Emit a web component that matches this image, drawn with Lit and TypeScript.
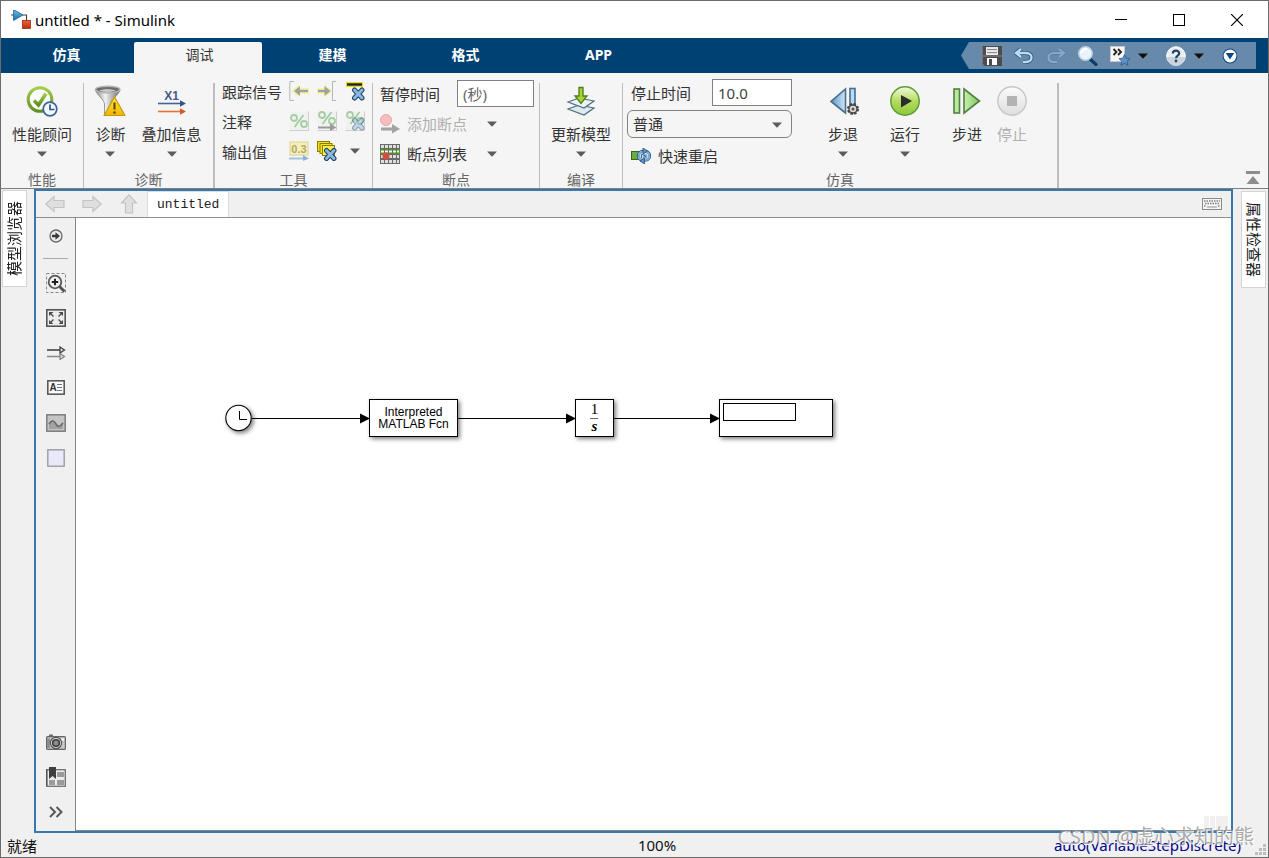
import { LitElement, html, css, svg, nothing, TemplateResult } from "lit";
import { customElement, property } from "lit/decorators.js";

const shared = css`
  * { box-sizing: border-box; }
  button, input, select {
    font: inherit;
    color: inherit;
    margin: 0;
    padding: 0;
    border: 0;
    background: none;
    border-radius: 0;
  }
  button { cursor: default; }
  svg { display: block; flex: none; }
`;

const icon = (w: number, h: number, body: unknown) =>
  html`<svg width=${w} height=${h} viewBox="0 0 ${w} ${h}" aria-hidden="true">${body}</svg>`;

const caret = (color = "#5c5c5c") => icon(10, 6, svg`<path d="M0 .5H10L5 5.8Z" fill=${color} />`);

/* ---------- title and quick access icons ---------- */

const logo = icon(20, 20, svg`
  <defs><linearGradient id="lg" x1="0" y1="0" x2="0" y2="1"><stop offset="0" stop-color="#6fc3ea" /><stop offset="1" stop-color="#1a6aa8" /></linearGradient>
  <linearGradient id="lr" x1="0" y1="0" x2="0" y2="1"><stop offset="0" stop-color="#f0603a" /><stop offset="1" stop-color="#b8300e" /></linearGradient></defs>
  <path d="M0 5H3M11 5H15.5V11" fill="none" stroke="#444" stroke-width="1.2" />
  <path d="M2.5 -.5L12 5L2.5 10.5Z" fill="url(#lg)" stroke="#1d5f92" stroke-width=".8" />
  <rect x="11.5" y="10.5" width="8" height="8" fill="url(#lr)" stroke="#9c2c10" stroke-width=".8" />`);

const saveIcon = icon(20, 20, svg`
  <path d="M0 0H20V20H2L0 18Z" fill="#4c4c4c" />
  <rect x="4" y="1" width="12" height="8" fill="#e6e6e6" />
  <path d="M5 3.5H15M5 6.5H15" stroke="#8a8a8a" />
  <path d="M0 10H20" stroke="#8d8d8d" />
  <rect x="5" y="12" width="10" height="7" fill="#fff" />
  <rect x="7" y="13" width="3" height="6" fill="#4c4c4c" />
  <path d="M.5 .5V17.5L2.5 19.5" stroke="#777" fill="none" />`);
const undoIcon = icon(20, 16, svg`
  <path d="M7 1L2 5L7 9M2 5H12C16 5 17.5 7.5 17.5 9.5C17.5 12.5 15 14 12 14H9" fill="none" stroke="#29577f" stroke-width="4" />
  <path d="M7 1L2 5L7 9M2 5H12C16 5 17.5 7.5 17.5 9.5C17.5 12.5 15 14 12 14H9" fill="none" stroke="#b9dcf2" stroke-width="2.4" />`);
const redoIcon = icon(20, 16, svg`
  <g transform="matrix(-1 0 0 1 20 0)" opacity=".55">
  <path d="M7 1L2 5L7 9M2 5H12C16 5 17.5 7.5 17.5 9.5C17.5 12.5 15 14 12 14H9" fill="none" stroke="#4f7ba3" stroke-width="4" />
  <path d="M7 1L2 5L7 9M2 5H12C16 5 17.5 7.5 17.5 9.5C17.5 12.5 15 14 12 14H9" fill="none" stroke="#9fc3df" stroke-width="2.2" /></g>`);
const searchIcon = icon(20, 20, svg`
  <path d="M12 13L18 18.5" stroke="#143c63" stroke-width="3.2" stroke-linecap="round" />
  <circle cx="7.5" cy="7.5" r="6.7" fill="#eaf3f9" stroke="#bcd2e2" stroke-width="1.5" />
  <path d="M3 7A5 5 0 0 1 9 3" fill="none" stroke="#fff" stroke-width="2" />`);
const favIcon = icon(20, 20, svg`
  <rect x=".5" y=".5" width="14" height="15" fill="#f6f6f6" stroke="#c8c8c8" />
  <path d="M3.5 3L6.5 6L3.5 9M8 3L11 6L8 9" fill="none" stroke="#222" stroke-width="1.8" />
  <path d="M14.5 8.5L16.2 12.2L20 12.6L17.2 15.3L18 19.3L14.5 17.3L11 19.3L11.8 15.3L9 12.6L12.8 12.2Z" fill="#5d93c4" stroke="#2c5a88" stroke-width=".8" />`);
const helpIcon = icon(20, 20, svg`
  <circle cx="10" cy="10" r="9.3" fill="#e9eef3" stroke="#fff" stroke-width="1" />
  <path d="M1 11A9 9 0 0 0 19 11Z" fill="#c9d4de" />
  <path d="M6.8 7.5C6.8 3.8 13.2 3.8 13.2 7.4C13.2 9.6 10 9.6 10 12.2" fill="none" stroke="#24455f" stroke-width="2.2" />
  <circle cx="10" cy="15" r="1.4" fill="#24455f" />`);
const moreIcon = icon(16, 16, svg`
  <circle cx="8" cy="8" r="7.4" fill="#0c4a7d" />
  <circle cx="8" cy="8" r="6.4" fill="#fff" />
  <path d="M3.8 5H12.2L8 11.6Z" fill="#0c4a7d" />`);

/* ---------- ribbon icons ---------- */

const perfIcon = icon(32, 32, svg`
  <defs><linearGradient id="pg" x1="0" y1="0" x2="0" y2="1"><stop offset="0" stop-color="#a5cf4b" /><stop offset="1" stop-color="#5f8f22" /></linearGradient></defs>
  <circle cx="14" cy="14.5" r="11.8" fill="#fafafa" stroke="url(#pg)" stroke-width="3" />
  <path d="M8 15.5L12.5 20L20 8.5" fill="none" stroke="url(#pg)" stroke-width="3.6" />
  <circle cx="24" cy="24" r="6.8" fill="#f3f8fd" stroke="#3b659a" stroke-width="1.7" />
  <path d="M24 19.5V24.5H28.5" fill="none" stroke="#2d568b" stroke-width="1.7" />`);
const diagIcon = icon(32, 32, svg`
  <defs><linearGradient id="fg" x1="0" y1="0" x2="1" y2="0"><stop offset="0" stop-color="#8a8a8a" /><stop offset=".4" stop-color="#f2f2f2" /><stop offset="1" stop-color="#6e6e6e" /></linearGradient>
  <linearGradient id="wg" x1="0" y1="0" x2="0" y2="1"><stop offset="0" stop-color="#ffe94a" /><stop offset="1" stop-color="#f0b400" /></linearGradient></defs>
  <path d="M1.5 5C2 9 10.5 15 10.5 19V30L16.5 28V19C16.5 15 25.5 9 26 5Z" fill="url(#fg)" stroke="#777" stroke-width=".7" />
  <ellipse cx="13.7" cy="4.5" rx="12.2" ry="3.3" fill="#6d6d6d" stroke="#b4b4b4" stroke-width="1.4" />
  <path d="M5 5.5Q13 2.5 22 5.5Q13 8.5 5 5.5" fill="#c9c9c9" />
  <path d="M20.5 12L31 30.5H10Z" fill="url(#wg)" stroke="#c99a06" stroke-width="1.2" stroke-linejoin="round" />
  <path d="M20.5 17.5V24.5" stroke="#6a4c00" stroke-width="2.2" /><circle cx="20.5" cy="27.5" r="1.3" fill="#6a4c00" />`);
const overlayIcon = icon(32, 32, svg`
  <text x="15.5" y="15" text-anchor="middle" font-family="Liberation Sans, sans-serif" font-weight="700" font-size="12" fill="#44598c">X1</text>
  <path d="M2 18.5H25" stroke="#44639a" stroke-width="1.6" /><path d="M24 15.3L30 18.5L24 21.7Z" fill="#34548c" />
  <path d="M2 26.5H25" stroke="#e2703a" stroke-width="1.6" /><path d="M24 23.3L30 26.5L24 29.7Z" fill="#d85a20" />`);

const blueX = svg`<path d="M9.5 9L17 17M17 9L9.5 17" stroke="#1f3f63" stroke-width="5" stroke-linecap="round" /><path d="M9.5 9L17 17M17 9L9.5 17" stroke="#8ab8e0" stroke-width="3" stroke-linecap="round" />`;
const pageBase = svg`<path d="M.5 .5H19.5V19.5H.5" fill="#f1f1f1" /><path d="M19.5 .5V19.5H.5" fill="none" stroke="#cfcfcf" />`;
const pct = svg`<path d="M14.5 4L5.5 16" stroke="#a5cfa2" stroke-width="1.8" /><circle cx="5" cy="7" r="3" fill="none" stroke="#a5cfa2" stroke-width="1.8" /><circle cx="15" cy="13" r="3" fill="none" stroke="#a5cfa2" stroke-width="1.8" />`;

const traceIn = icon(20, 20, svg`<path d="M1 .5H5M1 19.5H5M.8 .5V19.5" stroke="#b5b5b5" fill="none" />
  <path d="M2.500 10L10 3V7H20V13H10V17Z" fill="#f5f3a6" /><path d="M19 10H9" stroke="#a0a0a0" stroke-width="2.4" /><path d="M5 10L11 5V15Z" fill="#a0a0a0" />`);
const traceOut = icon(20, 20, svg`<path d="M15 .5H19M15 19.5H19M15.5 .5V19.5" stroke="#b5b5b5" fill="none" />
  <path d="M15 10L8 3V7H0V13H8V17Z" fill="#f5f3a6" /><path d="M1 10H10" stroke="#a0a0a0" stroke-width="2.4" /><path d="M13.5 10L7.5 5V15Z" fill="#a0a0a0" />`);
const traceClear = icon(20, 20, svg`<path d="M1 3.5H18" stroke="#e9dc1e" stroke-width="5" /><path d="M2 3.5H17" stroke="#222" stroke-width="2.4" />${blueX}`);
const noteOne = icon(20, 20, svg`${pageBase}${pct}`);
const noteTwo = icon(20, 20, svg`${pageBase}<g transform="translate(0 -3)">${pct}</g><path d="M1 16.5H15" stroke="#999" stroke-width="2" /><path d="M13 12.5L19.5 16.5L13 20Z" fill="#999" />`);
const noteClear = icon(20, 20, svg`${pageBase}<g transform="translate(0 -3)">${pct}</g><g opacity=".45">${blueX}</g>`);
const valueOut = icon(20, 20, svg`<rect x="1" y="1" width="18" height="13" fill="#f6efb6" stroke="#d9d29a" />
  <text x="10" y="12" text-anchor="middle" font-family="Liberation Sans, sans-serif" font-size="11" font-weight="700" fill="#b3a76a">0.3</text>
  <path d="M0 17.5H15" stroke="#a8c4dc" stroke-width="2" /><path d="M14 14L20 17.5L14 20Z" fill="#8fb2cf" />`);
const valueClear = icon(20, 20, svg`<rect x=".5" y=".5" width="12" height="10" fill="#f2e21c" stroke="#8a7d00" /><rect x="3" y="2.5" width="12" height="10" fill="#f2e21c" stroke="#8a7d00" /><rect x="5.5" y="4.5" width="12" height="10" fill="#fbf14d" stroke="#8a7d00" />
  <g transform="translate(0 .5)">${blueX}</g>`);

const bpAdd = icon(20, 20, svg`<circle cx="6" cy="6" r="5.5" fill="#f6bdbd" stroke="#e9a5a5" />
  <path d="M1 15H14" stroke="#a3a3a3" stroke-width="3" /><path d="M12 10L20 15L12 19.5Z" fill="#a3a3a3" />`);
const bpList = icon(20, 20, svg`<rect width="20" height="20" fill="#6a6a6a" />
  <path d="M1 2.5H19M1 12.5H19M1 17.5H19" stroke="#dedede" stroke-width="3" /><path d="M0 7.5H20" stroke="#4d9a26" stroke-width="5" /><path d="M1 7.5H19" stroke="#f0fbe8" stroke-width="2" />
  <path d="M4.5 0V20M8.5 0V20M12.5 0V20M16.5 0V20" stroke="#6a6a6a" stroke-width="1" /><circle cx="6" cy="12" r="3.6" fill="#d94b42" />`);
const updateIcon = icon(32, 32, svg`
  <path d="M3 24L14 20L29 23L19 30Z" fill="#dfeaf0" stroke="#4f6f7d" stroke-width="1.2" />
  <path d="M3 17L14 13L29 16L19 23Z" fill="#eaf3f6" stroke="#4f6f7d" stroke-width="1.2" />
  <path d="M14 2.500H18V11H22L16 18.500L10 11H14Z" fill="#a4d433" stroke="#4e7c14" stroke-width="1.3" />`);
const fastIcon = icon(20, 16, svg`<rect x=".5" y="3.5" width="7" height="8" fill="#6cab3d" stroke="#34651a" />
  <rect x="6.500" y="2.500" width="13" height="10.500" rx="4.500" fill="#cfe1f0" stroke="#24517e" />
  <rect x="8" y="4" width="10" height="7.500" rx="3.500" fill="none" stroke="#79a9d3" stroke-width="2" />
  <path d="M12 0L16.5 3L12 6ZM13.500 10L9 13L13.500 16Z" fill="#5f94c6" stroke="#24517e" stroke-width=".8" />
  <path d="M10.500 10V6.500H12M13 10V6.500L15 9.500V6.500" stroke="#2f5780" stroke-width=".9" fill="none" />`);

const backIcon = icon(32, 32, svg`
  <defs><linearGradient id="bb" x1="0" y1="0" x2="1" y2="0"><stop offset="0" stop-color="#5d98cb" /><stop offset="1" stop-color="#cfe6f6" /></linearGradient></defs>
  <path d="M18.5 4V28L4 16.5Z" fill="url(#bb)" stroke="#4a6d8c" stroke-width="1.6" />
  <rect x="23" y="3.5" width="5" height="24" fill="#b5dcf4" stroke="#4a6d8c" stroke-width="1.6" />
  <circle cx="26" cy="24" r="4.5" fill="#d6d6d6" stroke="#444" stroke-width="3" stroke-dasharray="2.2 1.33" /><circle cx="26" cy="24" r="4" fill="#dadada" stroke="#444" stroke-width="1.4" /><circle cx="26" cy="24" r="1.5" fill="#555" />`);
const runIcon = icon(32, 32, svg`
  <defs><linearGradient id="rg" x1="0" y1="0" x2="0" y2="1"><stop offset="0" stop-color="#f2fbdf" /><stop offset=".5" stop-color="#b4dc5e" /><stop offset="1" stop-color="#8cc63a" /></linearGradient></defs>
  <circle cx="16" cy="16" r="14.2" fill="url(#rg)" stroke="#5d9c35" stroke-width="1.5" />
  <path d="M12 10L23 16L12 22.5Z" fill="#2b2b2b" />`);
const stepIcon = icon(32, 32, svg`
  <defs><linearGradient id="sg" x1="0" y1="0" x2="1" y2="0"><stop offset="0" stop-color="#c9efb0" /><stop offset="1" stop-color="#7ccb55" /></linearGradient></defs>
  <rect x="3" y="4" width="5.5" height="24" fill="#b9ea9d" stroke="#527f43" stroke-width="1.6" />
  <path d="M13 4V28L28.5 16Z" fill="url(#sg)" stroke="#527f43" stroke-width="1.6" />`);
const stopIcon = icon(32, 32, svg`
  <defs><linearGradient id="tg" x1="0" y1="0" x2="0" y2="1"><stop offset="0" stop-color="#fbfbfb" /><stop offset="1" stop-color="#dedede" /></linearGradient></defs>
  <circle cx="16" cy="16" r="14.2" fill="url(#tg)" stroke="#c6c6c6" stroke-width="1.4" />
  <rect x="11" y="11" width="10" height="10" fill="#b3b3b3" />`);
const collapseIcon = icon(14, 14, svg`<path d="M0 1.5H14" stroke="#8d8d8d" stroke-width="3" /><path d="M7 5L13.5 13H.5Z" fill="#8d8d8d" />`);

/* ---------- editor icons ---------- */

const navArrow = (deg: number) => icon(20, 20, svg`<path d="M.8 10L9 2.500V6.500H19V13.500H9V17.500Z" transform="rotate(${deg} 10 10)" fill="#dfdfdf" stroke="#c4c4c4" stroke-width="1.2" />`);
const keyboardIcon = icon(20, 12, svg`<rect x=".5" y=".5" width="19" height="11" fill="#f5f5f5" stroke="#8a8a8a" />
  <path d="M2 3H18M3 5.5H18M2 8H4M16 8H18" stroke="#808080" stroke-width="1.5" stroke-dasharray="1.5 1" /><path d="M5 9H15" stroke="#909090" />`);
const hideIcon = icon(14, 14, svg`<circle cx="7" cy="7" r="6" fill="#ececec" stroke="#6a6a6a" stroke-width="1.3" /><path d="M3 5.7H6.5V3.3L11 7L6.5 10.7V8.3H3Z" fill="#3a3a3a" />`);
const zoomIcon = icon(20, 20, svg`<rect x=".5" y=".5" width="19" height="19" fill="none" stroke="#8a8a8a" stroke-dasharray="3 2" />
  <path d="M13.5 13.5L18.5 18.5" stroke="#505050" stroke-width="2.8" /><circle cx="9" cy="9" r="6.3" fill="#f0f0f0" stroke="#5a5a5a" stroke-width="1.8" />
  <path d="M9 5.8V12.2M5.8 9H12.2" stroke="#222" stroke-width="2" />`);
const fitIcon = icon(20, 18, svg`<rect x=".8" y=".8" width="18.4" height="16.4" fill="#ececec" stroke="#555" stroke-width="1.6" />
  <path d="M3 3H7.5L3 7ZM17 3H12.5L17 7ZM3 15H7.5L3 11ZM17 15H12.5L17 11Z" fill="#4a4a4a" /><path d="M4 4L7.5 7.5M16 4L12.5 7.5M4 14L7.5 10.5M16 14L12.5 10.5" stroke="#4a4a4a" stroke-width="1.3" />`);
const signalIcon = icon(20, 14, svg`<path d="M1 4H15" stroke="#444" stroke-width="1.6" /><path d="M14 1L18.5 4L14 7Z" fill="#ddd" stroke="#444" stroke-width="1.3" />
  <path d="M1 10.5H15" stroke="#8a8a8a" stroke-width="1.6" /><path d="M14 7.5L18.5 10.5L14 13.5Z" fill="#ddd" stroke="#808080" stroke-width="1.2" />`);
const textIcon = icon(18, 15, svg`<rect x=".8" y=".8" width="16.4" height="13.4" fill="#fafafa" stroke="#5a5a5a" stroke-width="1.6" />
  <text x="2.5" y="11" font-family="Liberation Sans, sans-serif" font-weight="700" font-size="10" fill="#333">A</text><path d="M10 4.5H15M10 7.5H15M10 10.5H15" stroke="#777" />`);
const imageIcon = icon(20, 18, svg`<rect x=".8" y=".8" width="18.4" height="16.4" fill="#c4c4c4" stroke="#777" stroke-width="1.4" />
  <path d="M3 9C6 4.5 8 6 10 10C12 13 13.5 12 17 8V15H3Z" fill="#a2a2a2" /><path d="M3 10C6 5.5 8 6.5 10 10C12 13.5 14 13 17 9" fill="none" stroke="#6b6b6b" stroke-width="1.6" />`);
const areaIcon = icon(18, 18, svg`<rect x=".8" y=".8" width="16.4" height="16.4" fill="#e9e9f9" stroke="#9c9ca0" stroke-width="1.4" />`);
const cameraIcon = icon(20, 16, svg`<rect x="3" y=".5" width="4" height="3" fill="#6a6a6a" /><rect x=".6" y="2.6" width="18.8" height="12.8" rx="1" fill="#c9c9c9" stroke="#666" stroke-width="1.2" />
  <path d="M1 4.5H4V14H1Z" fill="#8e8e8e" /><circle cx="10" cy="9" r="5.6" fill="#ddd" stroke="#555" stroke-width="1.2" /><circle cx="10" cy="9" r="3.3" fill="#8d8d8d" stroke="#3b3b3b" stroke-width="1.6" /><rect x="15.5" y="4.5" width="2.5" height="2" fill="#fff" />`);
const bookIcon = icon(20, 20, svg`<rect x=".7" y="2.7" width="18.6" height="16.6" fill="#ececec" stroke="#777" stroke-width="1.4" />
  <path d="M11 5H18V10H11ZM3 13H9V18H3ZM11 13H18V18H11Z" fill="#9a9a9a" /><path d="M.7 2V19" stroke="#555" stroke-width="1.4" /><path d="M3 0H10V12L6.5 9L3 12Z" fill="#3f3f3f" />`);
const chevrons = icon(14, 12, svg`<path d="M1 1L6 6L1 11M7.5 1L12.5 6L7.5 11" fill="none" stroke="#5a5a5a" stroke-width="2" />`);

/* ---------- title bar ---------- */

@customElement("sl-titlebar")
export class SlTitlebar extends LitElement {
  static styles = [shared, css`
    :host { display: flex; height: 37px; align-items: center; background: #fff; color: #000; padding: 0 2px 0 10px; }
    .name { flex: 1; margin-left: 4px; font-size: 15px; }
    .ctl { width: 58px; height: 36px; display: flex; align-items: center; justify-content: center; }
  `];
  render() {
    return html`
      ${logo}<span class="name">untitled * - Simulink</span>
      <button class="ctl" aria-label="最小化">${icon(12, 12, svg`<path d="M0 5.5H12" stroke="#000" />`)}</button>
      <button class="ctl" aria-label="最大化">${icon(12, 12, svg`<rect x=".5" y=".5" width="11" height="11" fill="none" stroke="#000" />`)}</button>
      <button class="ctl" aria-label="关闭">${icon(12, 12, svg`<path d="M0 0L12 12M12 0L0 12" stroke="#000" stroke-width="1.2" />`)}</button>`;
  }
}

/* ---------- tab strip ---------- */

@customElement("sl-tabs")
export class SlTabs extends LitElement {
  static styles = [shared, css`
    :host { display: flex; height: 35px; background: #004174; }
    .tabs { display: flex; gap: 5px; padding-top: 4px; flex: 1; }
    .tab { width: 128px; padding: 0 0 7px 3px; font-size: 14px; font-weight: 700; color: #fff; }
    .tab.on { background: #f5f5f5; color: #333; font-weight: 400; border-radius: 2px 2px 0 0; }
    .quick {
      align-self: flex-start; margin: 4px 12px 0 0; width: 295px; height: 27px; padding-left: 21px;
      background: #678aaa; display: flex; align-items: center;
      clip-path: polygon(8px 0, 100% 0, 100% 100%, 8px 100%, 0 50%);
    }
    .q { width: 32px; height: 27px; flex: none; display: flex; align-items: center; justify-content: flex-start; }
    .q.split { width: 28px; }
  `];
  render() {
    return html`
      <div class="tabs" role="tablist">
        ${["仿真", "调试", "建模", "格式", "APP"].map((t, i) => html`<button class="tab ${i === 1 ? "on" : ""}" role="tab" aria-selected=${i === 1}>${t}</button>`)}
      </div>
      <div class="quick">
        <button class="q" aria-label="保存">${saveIcon}</button>
        <button class="q" aria-label="撤消">${undoIcon}</button>
        <button class="q" aria-label="重做">${redoIcon}</button>
        <button class="q" aria-label="搜索">${searchIcon}</button>
        <button class="q split" aria-label="收藏夹">${favIcon}</button>
        <button class="q split" aria-label="收藏夹菜单">${caret("#111")}</button>
        <button class="q split" aria-label="帮助">${helpIcon}</button>
        <button class="q split" aria-label="帮助菜单">${caret("#111")}</button>
        <button class="q split" aria-label="更多">${moreIcon}</button>
      </div>`;
  }
}

/* ---------- ribbon ---------- */

@customElement("sl-big-button")
export class SlBigButton extends LitElement {
  @property() label = "";
  @property({ attribute: false }) glyph: TemplateResult | typeof nothing = nothing;
  @property({ type: Boolean }) menu = false;
  @property({ type: Boolean }) off = false;
  static styles = [shared, css`
    :host { display: block; }
    .big { display: flex; flex-direction: column; align-items: center; color: #333; font-size: 15px; }
    .big:disabled { color: #b0b0b0; }
    .glyph { height: 32px; margin: 0 -1px; }
    .text { line-height: 20px; margin: 7px 0; white-space: nowrap; }
  `];
  render() {
    return html`<button class="big" ?disabled=${this.off}>
      <span class="glyph">${this.glyph}</span><span class="text">${this.label}</span>${this.menu ? caret() : nothing}
    </button>`;
  }
}

@customElement("sl-ribbon")
export class SlRibbon extends LitElement {
  static styles = [shared, css`
    :host { display: flex; height: 116px; background: #f5f5f5; border-bottom: 1px solid #7d7d7d; color: #333; font-size: 15px; }
    .group { display: flex; flex-direction: column; justify-content: space-between; }
    .div { width: 1px; margin-top: 10px; background: #bdbdbd; flex: none; }
    .div.bold { width: 2px; }
    .cap { text-align: center; font-size: 14px; line-height: 16px; color: #666; }
    .bigs { display: flex; padding-top: 12px; justify-content: center; }
    .perf { width: 82px; }
    .diag { width: 129px; }
    .diag .bigs { gap: 16px; }
    .tools { width: 157px; }
    .bp { width: 166px; }
    .comp { width: 82px; }
    .sim { width: 434px; }
    .grid { display: grid; grid-template-columns: 63px 28px 28px 28px; grid-auto-rows: 30px; align-items: center; padding: 3px 0 0 7px; }
    .grid button { height: 30px; display: flex; align-items: center; justify-content: center; }
    .lines { display: flex; flex-direction: column; gap: 3px; padding: 7px 5px 0 7px; }
    .line { display: flex; align-items: center; height: 27px; justify-content: space-between; }
    .cmd { display: flex; align-items: center; gap: 7px; }
    .cmd:disabled { color: #b0b0b0; }
    .arrow { width: 20px; height: 27px; display: flex; align-items: center; justify-content: center; margin-right: 32px; }
    .box { height: 27px; border: 1px solid #828282; background: #fff; padding: 0 5px; color: #444; }
    .box::placeholder { color: #666; opacity: 1; }
    .box.pause { width: 77px; }
    .box.stop { width: 80px; }
    .simbody { display: flex; }
    .settings { width: 172px; display: flex; flex-direction: column; gap: 4px; padding: 6px 3px 0 4px; }
    .settings .line { padding-left: 4px; }
    .pick { position: relative; display: block; height: 28px; }
    .mode { appearance: none; width: 100%; height: 28px; border: 1px solid #828282; border-radius: 6px; padding: 0 5px; background: #f5f5f5; }
    .pick svg { position: absolute; right: 10px; top: 12px; pointer-events: none; }
    .runs { display: flex; padding: 12px 0 0 33px; }
    .runs .a { margin-right: 32px; }
    .runs .b { margin-right: 32px; }
    .runs .c { margin-right: 15px; }
    .fold { margin: auto 8px 3px auto; }
  `];
  render() {
    return html`
      <section class="group perf">
        <div class="bigs"><sl-big-button label="性能顾问" menu .glyph=${perfIcon}></sl-big-button></div>
        <div class="cap">性能</div>
      </section>
      <div class="div"></div>
      <section class="group diag">
        <div class="bigs">
          <sl-big-button label="诊断" menu .glyph=${diagIcon}></sl-big-button>
          <sl-big-button label="叠加信息" menu .glyph=${overlayIcon}></sl-big-button>
        </div>
        <div class="cap">诊断</div>
      </section>
      <div class="div bold"></div>
      <section class="group tools">
        <div class="grid">
          <span>跟踪信号</span><button aria-label="跟踪到源" disabled>${traceIn}</button><button aria-label="跟踪到目标" disabled>${traceOut}</button><button aria-label="删除跟踪">${traceClear}</button>
          <span>注释</span><button aria-label="注释" disabled>${noteOne}</button><button aria-label="注释信号" disabled>${noteTwo}</button><button aria-label="删除注释" disabled>${noteClear}</button>
          <span>输出值</span><button aria-label="显示输出值" disabled>${valueOut}</button><button aria-label="删除输出值">${valueClear}</button><button aria-label="输出值菜单">${caret()}</button>
        </div>
        <div class="cap">工具</div>
      </section>
      <div class="div"></div>
      <section class="group bp">
        <div class="lines">
          <div class="line"><label for="pause">暂停时间</label><input id="pause" class="box pause" placeholder="(秒)" /></div>
          <div class="line"><button class="cmd" disabled>${bpAdd}添加断点</button><button class="arrow" aria-label="添加断点菜单">${caret()}</button></div>
          <div class="line"><button class="cmd">${bpList}断点列表</button><button class="arrow" aria-label="断点列表菜单">${caret()}</button></div>
        </div>
        <div class="cap">断点</div>
      </section>
      <div class="div"></div>
      <section class="group comp">
        <div class="bigs"><sl-big-button label="更新模型" menu .glyph=${updateIcon}></sl-big-button></div>
        <div class="cap">编译</div>
      </section>
      <div class="div"></div>
      <section class="group sim">
        <div class="simbody">
          <div class="settings">
            <div class="line"><label for="stop">停止时间</label><input id="stop" class="box stop" .value=${"10.0"} /></div>
            <label class="pick"><select class="mode" aria-label="仿真模式"><option>普通</option></select>${caret()}</label>
            <div class="line"><button class="cmd">${fastIcon}快速重启</button></div>
          </div>
          <div class="runs">
            <sl-big-button class="a" label="步退" menu .glyph=${backIcon}></sl-big-button>
            <sl-big-button class="b" label="运行" menu .glyph=${runIcon}></sl-big-button>
            <sl-big-button class="c" label="步进" .glyph=${stepIcon}></sl-big-button>
            <sl-big-button label="停止" off .glyph=${stopIcon}></sl-big-button>
          </div>
        </div>
        <div class="cap">仿真</div>
      </section>
      <div class="div bold"></div>
      <button class="fold" aria-label="折叠工具条">${collapseIcon}</button>`;
  }
}

/* ---------- block diagram ---------- */

@customElement("sl-canvas")
export class SlCanvas extends LitElement {
  static styles = [shared, css`
    :host { display: block; overflow: hidden; background: #fff; }
    .plane { width: 100%; height: 100%; }
    .block { fill: #fff; stroke: #000; filter: drop-shadow(2px 2px 2px rgba(0, 0, 0, 0.5)); }
    .thin { fill: none; stroke: #000; }
    .name { font: 12px "Liberation Sans", sans-serif; text-anchor: middle; }
    .math { font: 15px "Liberation Serif", serif; text-anchor: middle; }
    .var { font-style: italic; font-weight: 700; }
  `];
  private wire(x1: number, x2: number) {
    return svg`<path class="thin" d="M${x1} 200.5H${x2 - 8}" /><path d="M${x2 - 10} 195.5L${x2} 200.5L${x2 - 10} 205.5Z" />`;
  }
  render() {
    return html`<svg class="plane" role="img" aria-label="模型框图">
      ${this.wire(176, 294)}${this.wire(382, 500)}${this.wire(538, 644)}
      <circle class="block" cx="162.5" cy="200" r="12.7" stroke-width="1.1" />
      <path class="thin" d="M163.5 193V201.5H171" />
      <rect class="block" x="293.5" y="181.5" width="88" height="37" />
      <text class="name" x="337.5" y="198">Interpreted</text>
      <text class="name" x="337.5" y="210">MATLAB Fcn</text>
      <rect class="block" x="499.5" y="181.5" width="38" height="37" />
      <text class="math" x="518.5" y="196">1</text>
      <path class="thin" d="M514 200.5H522" opacity=".6" />
      <text class="math var" x="518.5" y="213">s</text>
      <rect class="block" x="643.5" y="181.5" width="113" height="37" />
      <rect class="thin" x="647.5" y="185.5" width="72" height="17" />
    </svg>`;
  }
}

/* ---------- editor frame ---------- */

@customElement("sl-editor")
export class SlEditor extends LitElement {
  static styles = [shared, css`
    :host { display: flex; flex-direction: column; border: 2px solid #3779ad; background: #f0f0f0; }
    .nav { display: flex; height: 27px; align-items: center; padding-left: 9px; border-bottom: 1px solid #8e8e8e; }
    .nav .go { width: 37px; }
    .doc { height: 26px; padding: 0 9px; background: #fff; border: 1px solid #dcdcdc; border-bottom: 0; font-family: "Liberation Mono", monospace; font-size: 13px; color: #222; width: 82px; margin-left: -9px; }
    .keys { margin: 0 9px 0 auto; }
    .body { flex: 1; display: flex; min-height: 0; }
    .side { width: 40px; display: flex; flex-direction: column; border-right: 1px solid #85858a; }
    .side button { height: 35px; display: flex; align-items: center; justify-content: center; }
    .rule { height: 1px; margin: 5px 7px 6px; background: #a8a8a8; flex: none; }
    .gap { flex: 1; }
    .tail { padding-bottom: 2px; display: flex; flex-direction: column; }
    sl-canvas { flex: 1; border-bottom: 1px solid #85858a; }
  `];
  render() {
    const tools: [string, TemplateResult][] = [["缩放", zoomIcon], ["适应视图", fitIcon], ["信号", signalIcon], ["注释", textIcon], ["图像", imageIcon], ["区域", areaIcon]];
    const tail: [string, TemplateResult][] = [["截图", cameraIcon], ["浏览器", bookIcon], ["展开", chevrons]];
    const btn = ([name, g]: [string, TemplateResult]) => html`<button aria-label=${name}>${g}</button>`;
    return html`
      <div class="nav">
        <button class="go" aria-label="后退">${navArrow(0)}</button>
        <button class="go" aria-label="前进">${navArrow(180)}</button>
        <button class="go" aria-label="向上">${navArrow(90)}</button>
        <button class="doc">untitled</button>
        <button class="keys" aria-label="键盘快捷方式">${keyboardIcon}</button>
      </div>
      <div class="body">
        <div class="side">
          ${btn(["隐藏浏览器", hideIcon])}
          <div class="rule"></div>
          ${tools.map(btn)}
          <div class="gap"></div>
          <div class="tail">${tail.map(btn)}</div>
        </div>
        <sl-canvas></sl-canvas>
      </div>`;
  }
}

/* ---------- window ---------- */

@customElement("app-root")
export class AppRoot extends LitElement {
  static styles = [shared, css`
    :host {
      position: relative; display: flex; flex-direction: column; height: 100vh; min-height: 640px;
      box-sizing: border-box; border: 1px solid #6b6b6b; background: #f0f0f0; overflow: hidden;
      font-family: "Noto Sans", "Noto Sans CJK SC", sans-serif; font-size: 15px; color: #111;
    }
    .work { flex: 1; display: flex; min-height: 0; }
    sl-editor { flex: 1; min-width: 0; }
    .rail { width: 33px; padding: 1px 7px 0 1px; }
    .rail.right { width: 35px; padding: 2px 2px 0 8px; }
    .dock { writing-mode: vertical-rl; text-orientation: sideways; width: 25px; height: 97px; background: #fff; border: 1px solid #d4d4d4; color: #222; font-size: 15px; line-height: 23px; text-align: center; }
    .dock.flip { transform: rotate(180deg); }
    .status { display: grid; grid-template-columns: 1fr auto 1fr; align-items: center; height: 24px; padding: 0 27px 0 6px; }
    .solver { justify-self: end; color: #00008b; text-decoration: none; }
    .pct { padding-left: 66px; }
    .status span:first-child { white-space: nowrap; }
    .mark { position: absolute; right: 14px; bottom: 8px; font-size: 20px; line-height: 24px; color: rgba(145, 145, 145, 0.75); text-shadow: 1px 1px 0 #fff; pointer-events: none; }
    .grip { position: absolute; right: 2px; bottom: 2px; }
    .bars { position: absolute; right: 39px; bottom: 28px; }
  `];
  render() {
    return html`
      <sl-titlebar></sl-titlebar>
      <sl-tabs></sl-tabs>
      <sl-ribbon></sl-ribbon>
      <div class="work">
        <div class="rail"><button class="dock flip">模型浏览器</button></div>
        <sl-editor></sl-editor>
        <div class="rail right"><button class="dock">属性检查器</button></div>
      </div>
      <div class="status"><span>就绪</span><span class="pct">100%</span><a class="solver" href="#solver">auto(VariableStepDiscrete)</a></div>
      <div class="bars">${icon(26, 13, svg`<path d="M1 0H6V13H1ZM7 0H12V13H7ZM13 0H25V13H13Z" fill="#f0f0f0" />`)}</div>
      <div class="grip">${icon(11, 11, svg`<path d="M8 0H11V3H8ZM4 4H7V7H4ZM8 4H11V7H8ZM0 8H3V11H0ZM4 8H7V11H4ZM8 8H11V11H8Z" fill="#bdbdbd" />`)}</div>
      <div class="mark">CSDN @虚心求知的熊</div>`;
  }
}
